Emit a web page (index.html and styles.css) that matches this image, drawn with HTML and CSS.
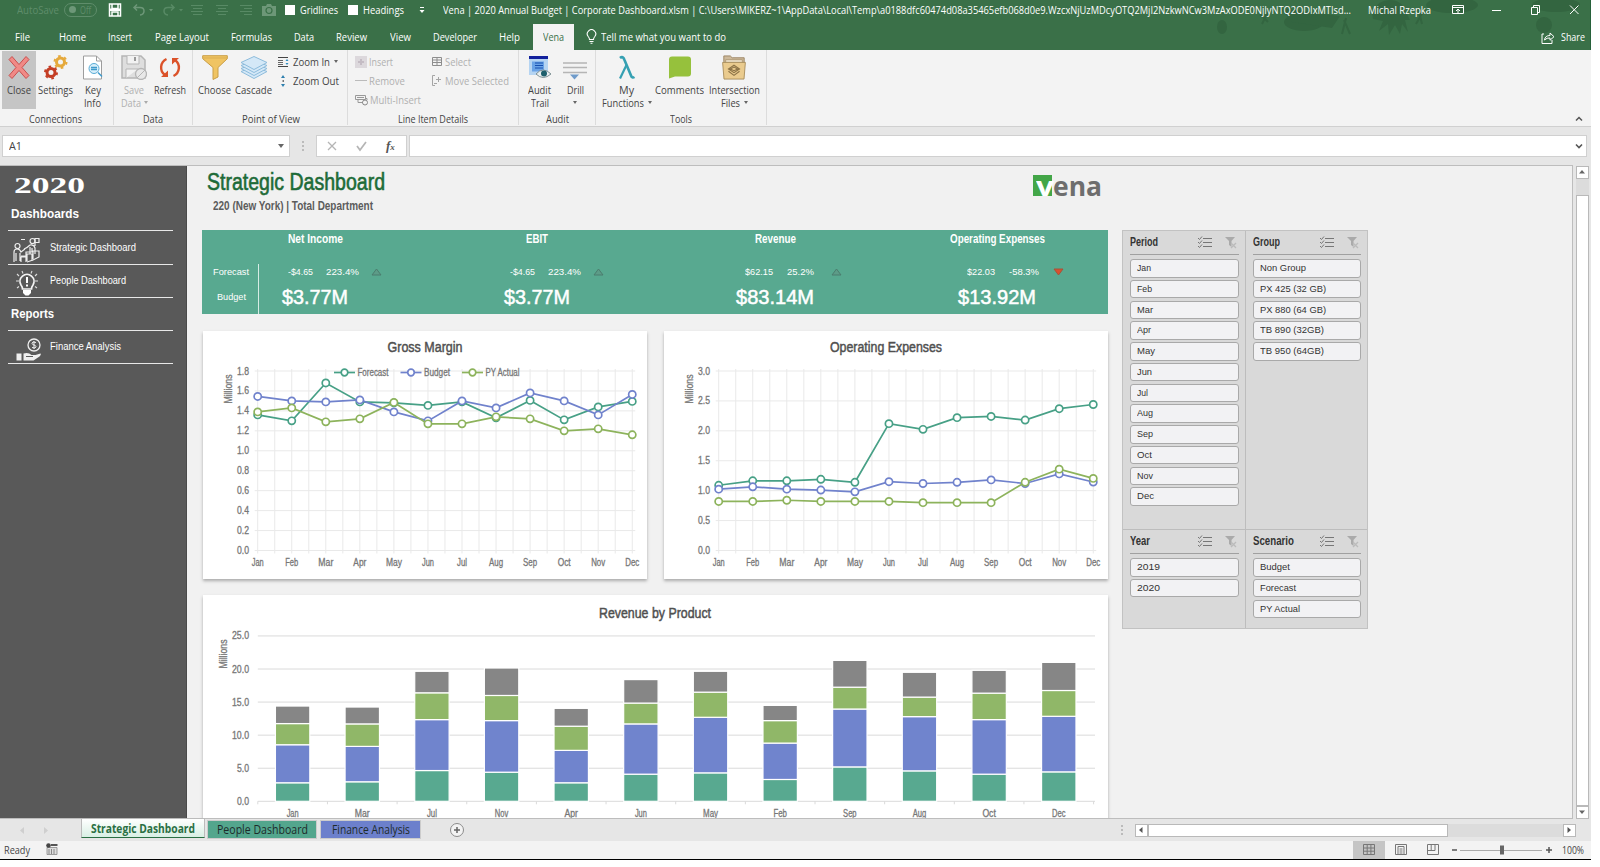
FILE: index.html
```html
<!DOCTYPE html>
<html>
<head>
<meta charset="utf-8">
<title>Corporate Dashboard</title>
<link rel="stylesheet" href="styles.css">
</head>
<body>
<div class="app">

<header class="top">
<svg class="top-art" width="430" height="50" viewBox="0 0 430 50">
<g fill="#336540"><ellipse cx="144" cy="22" rx="20" ry="9"/><path d="M120 8l60 8-8 12-40-6z"/><circle cx="384" cy="25" r="8"/><ellipse cx="62" cy="27" rx="5" ry="7"/><path d="M212 12q6-12 18-12t16 12l4 8-5 0 3 12-6-8-2 10-5-9-6 10-1-11-9 7 4-10-10-2z"/><ellipse cx="292" cy="5" rx="26" ry="8"/><ellipse cx="396" cy="5" rx="24" ry="7"/></g>
<g stroke="#336540" stroke-width="2"><path d="M-52 24l10-8M-46 26l3-12M182 34l4-16M190 34l-6-14M256 24l8-14M262 24l-4-16M100 14l8 8M108 12l-6 12"/></g>
</svg>
<div class="titlebar">
<span class="autosave"><b data-w="42">AutoSave</b></span>
<span class="toggle"><i></i><b data-w="11">Off</b></span>
<svg class="t-save" width="14" height="14" viewBox="0 0 14 14"><path d="M1.500 1h11v12h-11zM4 1v4.500h6V1M4 13V9h6v4" fill="none" stroke="#fff" stroke-width="1.500"/><path d="M2 5.500h10v2.500H2z" fill="#fff"/></svg>
<svg class="t-undo" width="22" height="14" viewBox="0 0 22 14"><path d="M5 1.500L2 4.500l3 3M2 4.500h6q4 0 4 3.500t-4 4" fill="none" stroke="#6d9778" stroke-width="1.500"/><path d="M17 6h4l-2 2.500z" fill="#6d9778"/></svg>
<svg class="t-redo" width="22" height="14" viewBox="0 0 22 14"><path d="M9 1.500l3 3-3 3M12 4.500H6q-4 0-4 3.500t4 4" fill="none" stroke="#588a65" stroke-width="1.500"/><path d="M17 6h4l-2 2.500z" fill="#588a65"/></svg>
<svg class="t-al" width="62" height="12" viewBox="0 0 62 12"><path d="M0 1.500h12M2 4.500h9M0 7.500h12M2 10.500h9M25 1.500h12M27 4.500h8M25 7.500h12M27 10.500h8M49 1.500h12M53 4.500h8M49 7.500h12M53 10.500h8" stroke="#588a65"/></svg>
<svg class="t-cam" width="14" height="12" viewBox="0 0 14 12"><path d="M0 2h4l1-2h4l1 2h4v10H0z" fill="#6d9778"/><circle cx="7" cy="6.500" r="3" fill="none" stroke="#3a7048" stroke-width="1.200"/></svg>
<i class="check"></i><span class="t-txt" data-w="38">Gridlines</span>
<i class="check second"></i><span class="t-txt" data-w="41">Headings</span>
<svg class="t-more" width="6" height="8" viewBox="0 0 6 8"><path d="M1 1.500h4" stroke="#fff"/><path d="M.5 4h5L3 7z" fill="#fff"/></svg>
<span class="doc" data-w="908">Vena | 2020 Annual Budget | Corporate Dashboard.xlsm | C:\Users\MIKERZ~1\AppData\Local\Temp\a0188dfc60474d08a35465efb068d0e9.WzcxNjUzMDcyOTQ2MjI2NzkwNCw3MzAxODE0NjIyNTQ2ODIxMTIsd...</span>
<span class="user" data-w="63">Michal Rzepka</span>
<svg class="t-win" width="128" height="14" viewBox="0 0 128 14"><g fill="none" stroke="#fff"><path d="M.5 2.500h11v8H.5zM.5 4.500h11M6 10V6M4 8l2-2 2 2"/><path d="M40 7.500h9M79.500 4.500h6v7h-6zM81.500 4V2.500h6v7H86M118 2.500l8.500 8.500M126.500 2.500L118 11"/></g></svg>
</div>
<nav class="tabs">
<span class="first"><b data-w="15">File</b></span>
<span><b data-w="27">Home</b></span>
<span><b data-w="24">Insert</b></span>
<span><b data-w="54">Page Layout</b></span>
<span><b data-w="41">Formulas</b></span>
<span><b data-w="20">Data</b></span>
<span><b data-w="31">Review</b></span>
<span><b data-w="21">View</b></span>
<span><b data-w="44">Developer</b></span>
<span><b data-w="21">Help</b></span>
<span class="active"><b data-w="21">Vena</b></span>
<svg class="bulb" width="11" height="15" viewBox="0 0 11 15"><path d="M3.500 10.500Q3.500 9 2.200 7.500A4.200 4.200 0 1 1 8.800 7.500Q7.500 9 7.500 10.500zM3.500 12.500h4M4.500 14.200h2" fill="none" stroke="#fff" stroke-width="1.100"/></svg>
<b data-w="125">Tell me what you want to do</b>
<span class="share"><svg width="14" height="13" viewBox="0 0 14 13"><path d="M3 3H1v9.500h10V9M3.500 9Q4 4.500 9 4.500V2l4 3.700-4 3.500V7Q6 6.500 3.500 9z" fill="none" stroke="#fff"/></svg><b data-w="24">Share</b></span>
</nav>
</header>

<section class="ribbon">
<div class="group g-conn">
<div class="tools">
<div class="big on"><svg width="24" height="24" viewBox="0 0 24 24"><path d="M2 4l3-3 7 8 7-8 3 3-7 8 7 8-3 3-7-8-7 8-3-3 7-8z" fill="#f08a86" stroke="#c9504f"/></svg><b data-w="24">Close</b></div>
<div class="big b-set"><svg width="24" height="24" viewBox="0 0 24 24"><circle cx="16.500" cy="6.500" r="4" fill="none" stroke="#e5a93c" stroke-width="3"/><circle cx="16.500" cy="6.500" r="6" fill="none" stroke="#e5a93c" stroke-width="2" stroke-dasharray="2.600 3.680"/><circle cx="7" cy="17" r="4" fill="none" stroke="#c43e25" stroke-width="3"/><circle cx="7" cy="17" r="6" fill="none" stroke="#c43e25" stroke-width="2" stroke-dasharray="2.600 3.680"/></svg><b data-w="35">Settings</b></div>
<div class="big b-key"><svg width="24" height="24" viewBox="0 0 24 24"><path d="M2.500.5h13l5 5v18h-18z" fill="#fff" stroke="#9d9d9d"/><path d="M15.500.5v5h5" fill="none" stroke="#9d9d9d"/><circle cx="13" cy="13" r="5" fill="#d9effa" stroke="#58acd6"/><path d="M10 12h6M10 14h6M17 17l4 4" stroke="#3f9bcc" stroke-width="1.500"/></svg><b data-w="16">Key</b><b data-w="17">Info</b></div>
</div>
<h4><b data-w="53">Connections</b></h4>
</div>
<div class="group g-data">
<div class="tools">
<div class="big off"><svg width="26" height="25" viewBox="0 0 26 25"><path d="M1 1h19l4 4v18H1z" fill="#dedede" stroke="#b5b5b5" stroke-width="1.500"/><path d="M6 1v8h12V1M5 23V14h12" fill="#f2f2f2" stroke="#b5b5b5"/><path d="M14 2v4" stroke="#999" stroke-width="2"/><circle cx="20" cy="19" r="5.500" fill="#e8e8e8" stroke="#b5b5b5" stroke-width="1.300"/><path d="M16 23l8-8" stroke="#b5b5b5"/></svg><b data-w="20">Save</b><span><b data-w="20">Data</b><i class="caret"></i></span></div>
<div class="big"><svg width="24" height="24" viewBox="0 0 24 24"><path d="M8.500 3.500A9.300 9.300 0 0 0 7 19.500M15.500 20.500A9.300 9.300 0 0 0 17 4.500" fill="none" stroke="#db5229" stroke-width="2.400"/><path d="M3 21.500h7V15zM21 2.500h-7V9z" fill="#db5229"/></svg><b data-w="32">Refresh</b></div>
</div>
<h4><b data-w="20">Data</b></h4>
</div>
<div class="group g-pov">
<div class="tools">
<div class="big"><svg width="26" height="25" viewBox="0 0 26 25"><path d="M.7.700h24.600v3L16 12.500V22l-5 2.500v-12L.7 3.700z" fill="#f0c462" stroke="#c99e46"/><path d="M1 3h24" stroke="#d9ad50"/></svg><b data-w="33">Choose</b></div>
<div class="big"><svg width="28" height="24" viewBox="0 0 28 24"><g fill="#d4e8f7" stroke="#8dbcdc"><path d="M1 16l13-5 13 5-13 7z"/><path d="M1 13l13-5 13 5-13 7z"/><path d="M1 10l13-5 13 5-13 7z"/><path d="M1 7l13-6 13 6-13 7z"/></g></svg><b data-w="37">Cascade</b></div>
<div class="small">
<p><svg width="12" height="12" viewBox="0 0 12 12"><path d="M0 1.500h10M0 10.500h10" stroke="#444"/><path d="M0 4.500h5M0 6.500h5M0 8.500h5" stroke="#666"/><path d="M9 3l1.500 2h-3zM9 9l1.500-2h-3z" fill="#2e8bc0"/></svg><b data-w="37">Zoom In</b><i class="caret"></i></p>
<p><svg width="12" height="12" viewBox="0 0 12 12"><path d="M5 0l2 3H3zM5 12l2-3H3z" fill="#2e7fae"/><path d="M4.500 5h1.500v2H4.500z" fill="#777"/></svg><b data-w="46">Zoom Out</b></p>
</div>
</div>
<h4><b data-w="58">Point of View</b></h4>
</div>
<div class="group g-line">
<div class="tools">
<div class="small off">
<p><svg width="12" height="12" viewBox="0 0 12 12"><path d="M0 0h12v12H0z" fill="#dcd8dc"/><path d="M6 3v6M3 6h6" stroke="#c4bcc4" stroke-width="2"/></svg><b data-w="24">Insert</b></p>
<p><svg width="12" height="12" viewBox="0 0 12 12"><path d="M0 5.500h12" stroke="#bbb"/></svg><b data-w="36">Remove</b></p>
<p><svg width="13" height="12" viewBox="0 0 13 12"><path d="M.5 1.500h10v4H.5zM3 5.500v3h5M2 3.500h7M12 6V4.500h-2" fill="none" stroke="#999"/><circle cx="10" cy="8.500" r="2.500" fill="none" stroke="#888"/></svg><b data-w="51">Multi-Insert</b></p>
</div>
<div class="small off second">
<p><svg width="10" height="11" viewBox="0 0 10 11"><path d="M.5 1.500h9v8h-9zM.5 4h9M.5 6.500h9M5 1v9" fill="none" stroke="#8d8d8d"/></svg><b data-w="26">Select</b></p>
<p><svg width="10" height="11" viewBox="0 0 10 11"><path d="M3 .5H.5v10H3M4 4.500h5M6.500 2v5M2 8.500h3" fill="none" stroke="#a5a5a5"/></svg><b data-w="64">Move Selected</b></p>
</div>
</div>
<h4><b data-w="70">Line Item Details</b></h4>
</div>
<div class="group g-audit">
<div class="tools">
<div class="big"><svg width="24" height="25" viewBox="0 0 24 25"><path d="M1 1h19v19H1z" fill="#b5d4f2"/><path d="M1 1h19v3H1z" fill="#12209c"/><path d="M4 6.500h12v10H4z" fill="#6aa3e6"/><path d="M7 8h8M7 10.500h8M7 13h8" stroke="#174fb0"/><path d="M8 19q7-8 15 0-8 7-15 0z" fill="#e8eef0" stroke="#7d9094"/><circle cx="16" cy="18.500" r="3" fill="#1e5f6c"/></svg><b data-w="23">Audit</b><b data-w="18">Trail</b></div>
<div class="big b-drill"><svg width="24" height="24" viewBox="0 0 24 24"><path d="M0 7.500h24M0 12h24M0 17h24" stroke="#b5b5b5" stroke-width="1.400"/><path d="M7 19h9l-4.500 5z" fill="#6f9bca"/></svg><b data-w="17">Drill</b><i class="caret low"></i></div>
</div>
<h4><b data-w="23">Audit</b></h4>
</div>
<div class="group g-tools">
<div class="tools">
<div class="big"><svg width="18" height="24" viewBox="0 0 18 24"><path d="M2 2.500q3-2.500 4.500 2L13 20q1 3 3.500 1.500" fill="none" stroke="#35a0b2" stroke-width="2.600"/><path d="M8.500 9.500L2 23" stroke="#35a0b2" stroke-width="2.200"/></svg><b data-w="15">My</b><span><b data-w="42">Functions</b><i class="caret"></i></span></div>
<div class="big"><svg width="22" height="24" viewBox="0 0 22 24"><path d="M3 1h16q3 0 3 3v14q0 3-3 3H6l-6 2V4q0-3 3-3z" fill="#96c13c"/></svg><b data-w="49">Comments</b></div>
<div class="big"><svg width="26" height="27" viewBox="0 0 26 27"><path d="M2 7V1h7l2 2h13v6H2z" fill="#cdb99a" stroke="#9a8461"/><path d="M4 5h18v4H4z" fill="#e9dcc4" stroke="#b19c78"/><path d="M.7 8h24.600l-1.500 18H2.200z" fill="#eacb8e" stroke="#a98e5c"/><path d="M13 11l6 4-6 4-6-4zM7 17.500l6 4.500 6-4.500M9 15l4-2 4 2-4 2z" fill="none" stroke="#8c7346" stroke-width="1.200"/></svg><b data-w="51">Intersection</b><span><b data-w="19">Files</b><i class="caret"></i></span></div>
</div>
<h4><b data-w="22">Tools</b></h4>
</div>
<svg class="collapse" width="8" height="6" viewBox="0 0 8 6"><path d="M1 4.500l3-3 3 3" fill="none" stroke="#555" stroke-width="1.500"/></svg>
</section>

<section class="formula">
<div class="namebox"><b data-w="13">A1</b><i class="caret wide"></i></div>
<i class="dots"></i>
<div class="fx"><svg width="92" height="20" viewBox="0 0 92 20"><path d="M11 6l8 8M19 6l-8 8" stroke="#b5b5b5" stroke-width="1.300"/><path d="M40 10l3 4 6-8" fill="none" stroke="#b5b5b5" stroke-width="1.700"/></svg><em>f<small>x</small></em></div>
<div class="finput"><svg width="8" height="6" viewBox="0 0 8 6"><path d="M1 1.500l3 3 3-3" fill="none" stroke="#555" stroke-width="1.600"/></svg></div>
</section>

<main class="work">
<div class="sheet">
<aside class="side">
<div class="year"><b data-w="71">2020</b></div>
<h3><b data-w="68">Dashboards</b></h3>
<div class="item tall"><svg width="28" height="27" viewBox="0 0 28 27"><g fill="none" stroke="#eee" stroke-width="1.200"><circle cx="4.500" cy="9" r="2.500"/><circle cx="19.500" cy="4" r="2.500"/><path d="M1 25V15q0-3 3-3t4 3l4-3M3 16v8M7 16v8M22 1v8M22 1.500h4v4h-4M17 8q-3 3-6 4M17 8q4-1 5 3v6M17 10v7M8 19h5v-4h6v-4M8 25V20h5v5M14 24v-7h5v7M20 22v-8h6v6l-6 3-6 2M8 2.500h4"/></g></svg><b data-w="86">Strategic Dashboard</b></div>
<div class="item"><svg width="28" height="27" viewBox="0 0 28 27"><path d="M9.500 19Q9.500 17 8 15a7 7 0 1 1 12 0q-1.500 2-1.500 4z" fill="none" stroke="#f4f4f4" stroke-width="1.700"/><path d="M10 20h8v3l-2.500 2.500h-3L10 23z" fill="#fff"/><path d="M14 7v6M14 14.500v2" stroke="#fff" stroke-width="2"/><path d="M3 11h3M22 11h3M4 4l2 2M24 4l-2 2M9 1l1 2.500M19 1l-1 2.500M4 18l2-1.500M24 18l-2-1.500" stroke="#ddd" stroke-width="1.100"/></svg><b data-w="76">People Dashboard</b></div>
<h3 class="rep"><b data-w="43">Reports</b></h3>
<div class="item fin"><svg width="28" height="27" viewBox="0 0 28 27"><circle cx="21" cy="9" r="6" fill="none" stroke="#eee" stroke-width="1.300"/><path d="M23 6.500q-4-1.500-4 .8 0 1.200 2 1.700t2 1.700q0 2.300-4 .8M21 5v8" fill="none" stroke="#eee"/><path d="M3.500 17.500h5v7h-5zM10.500 17.500q5-1.500 8 1.500h4l5-1.500q1 1-1 3l-6 4h-10z" fill="#eee"/><path d="M13 20.500h7" stroke="#595959"/></svg><b data-w="71">Finance Analysis</b></div>
</aside>

<div class="board">
<div class="board-head">
<div><h1><b data-w="178">Strategic Dashboard</b></h1><h2><b data-w="160">220 (New York) | Total Department</b></h2></div>
<div class="logo"><span class="v"><b data-w="18">v</b></span><b class="ena" data-w="49">ena</b></div>
</div>
<div class="kpis">
<div class="kpi-labels"><b data-w="36">Forecast</b><b data-w="29">Budget</b></div>
<div class="kpi"><h5><b data-w="55">Net Income</b></h5><div class="row"><span><b data-w="25">-$4.65</b></span><b data-w="33">223.4%</b><svg width="11" height="8" viewBox="0 0 11 8"><path d="M5.500 1L10 7H1z" fill="#5d9c88" stroke="#4b7d6e"/></svg></div><div class="num"><b data-w="66">$3.77M</b></div></div>
<div class="kpi"><h5><b data-w="22">EBIT</b></h5><div class="row"><span><b data-w="25">-$4.65</b></span><b data-w="33">223.4%</b><svg width="11" height="8" viewBox="0 0 11 8"><path d="M5.500 1L10 7H1z" fill="#5d9c88" stroke="#4b7d6e"/></svg></div><div class="num"><b data-w="66">$3.77M</b></div></div>
<div class="kpi right"><h5><b data-w="41">Revenue</b></h5><div class="row late"><span><b data-w="28">$62.15</b></span><b data-w="27">25.2%</b><svg width="11" height="8" viewBox="0 0 11 8"><path d="M5.500 1L10 7H1z" fill="#5d9c88" stroke="#4b7d6e"/></svg></div><div class="num"><b data-w="78">$83.14M</b></div></div>
<div class="kpi"><h5><b data-w="95">Operating Expenses</b></h5><div class="row late"><span><b data-w="28">$22.03</b></span><b data-w="30">-58.3%</b><svg width="11" height="8" viewBox="0 0 11 8"><path d="M1 1h9L5.500 7z" fill="#d9502f" stroke="#a5533a"/></svg></div><div class="num"><b data-w="78">$13.92M</b></div></div>
</div>
<div class="charts">
<svg class="card" id="gross" width="444" height="248"></svg>
<svg class="card" id="opex" width="444" height="248"></svg>
<svg class="card wide" id="revenue" width="905" height="240"></svg>
</div>
</div>

<div class="slicers" id="slicers"></div>
</div>
<div class="vscroll"><i class="btn"><svg width="10" height="10" viewBox="0 0 10 10"><path d="M5 3l3 3.500H2z" fill="#666"/></svg></i><i class="track"></i><i class="thumb"></i><i class="btn"><svg width="10" height="10" viewBox="0 0 10 10"><path d="M5 7l3-3.500H2z" fill="#666"/></svg></i></div>
</main>

<section class="sheets">
<svg class="nav" width="81" height="22" viewBox="0 0 81 22"><path d="M24 8v7l-4-3.500zM44 8v7l4-3.500z" fill="#cfcfcf"/></svg>
<div class="st active"><b data-w="104">Strategic Dashboard</b></div>
<div class="st green"><b data-w="91">People Dashboard</b></div>
<div class="st blue"><b data-w="78">Finance Analysis</b></div>
<svg class="add" width="16" height="16" viewBox="0 0 16 16"><circle cx="8" cy="8" r="6.500" fill="#f3f3f3" stroke="#8c8c8c"/><path d="M8 5v6M5 8h6" stroke="#666" stroke-width="1.500"/></svg>
<i class="dots"></i>
<div class="hscroll"><i class="btn"><svg width="10" height="10" viewBox="0 0 10 10"><path d="M3 5l3.500-3v6z" fill="#555"/></svg></i><i class="thumb"></i><i class="track"></i><i class="btn"><svg width="10" height="10" viewBox="0 0 10 10"><path d="M7 5L3.500 2v6z" fill="#555"/></svg></i></div>
</section>

<footer class="status">
<b data-w="26">Ready</b>
<svg class="rec" width="12" height="12" viewBox="0 0 12 12"><path d="M1 4.500h10v7H1z" fill="#ddd" stroke="#888" stroke-width=".8"/><path d="M5 1h6.500v2H5z" fill="#555"/><circle cx="2.500" cy="2.500" r="2.300" fill="#444"/><path d="M3 6v5M5.500 6v5M8 6v5" stroke="#888"/></svg>
<div class="view on"><svg width="12" height="12" viewBox="0 0 12 12"><path d="M.5.5h11v10H.5zM.5 4h11M.5 7.200h11M4.200.5v10M7.900.5v10" fill="none" stroke="#777"/></svg></div>
<div class="view"><svg width="12" height="12" viewBox="0 0 12 12"><path d="M.5.5h11v10H.5zM3 2.500h6v8H3zM4.500 5h3M4.500 7h3M4.500 9h3" fill="none" stroke="#777"/></svg></div>
<div class="view"><svg width="12" height="12" viewBox="0 0 12 12"><path d="M.5.5h11v10H.5zM.5 6.500H8v-6M4.200.5v6" fill="none" stroke="#777"/></svg></div>
<svg class="slider" width="100" height="12" viewBox="0 0 100 12"><path d="M0 6h5M94 6h6M97 3v6" stroke="#555" stroke-width="1.500"/><path d="M8 6.500h82" stroke="#aaa"/><path d="M48 1.500h4v9h-4z" fill="#666"/></svg>
<b class="zoom" data-w="22">100%</b>
</footer>
</div>
<script src="script.js"></script>
</body>
</html>
```

FILE: styles.css
```css
*{
box-sizing:border-box;
}
body{
margin:0;
background:#fff;
font-family:"Open Sans","Noto Sans",sans-serif;
font-size:11px;
color:#444;
}
h1,h2,h3,h4,h5,p{
margin:0;
font-weight:normal;
}
b{
font-weight:inherit;
}
svg{
display:block;
flex:none;
}
[data-w]{
display:inline-block;
flex:none;
white-space:nowrap;
transform-origin:0 50%;
}
.app{
width:1591px;
height:860px;
display:flex;
flex-direction:column;
background:#e6e6e6;
border-bottom:1px solid #000;
overflow:hidden;
}

/* title bar and tabs */
.top{
position:relative;
height:50px;
background:#3a7048;
color:#fff;
border-right:1px solid #27613a;
}
.top-art{
position:absolute;
right:0;
top:0;
}
.titlebar{
position:relative;
display:flex;
align-items:center;
height:19px;
padding-left:17px;
}
.autosave{
color:#5f8d6b;
}
.toggle{
display:flex;
align-items:center;
gap:4px;
width:33px;
height:14px;
margin-left:5px;
padding-left:4px;
border:1px solid #5f8d6b;
border-radius:7px;
color:#5f8d6b;
font-size:10px;
}
.toggle i{
width:7px;
height:7px;
border-radius:50%;
background:#6d9778;
}
.t-save{margin-left:11px;}
.t-undo{margin-left:10px;}
.t-redo{margin-left:8px;}
.t-al{margin-left:7px;}
.t-cam{margin-left:9px;}
.check{
width:10px;
height:10px;
margin:0 5px 0 9px;
background:#fff;
}
.check.second{
margin-left:10px;
}
.t-more{
margin:0 18px 0 15px;
}
.user{
margin-left:17px;
}
.t-win{
margin-left:21px;
}
.tabs{
position:relative;
display:flex;
align-items:center;
height:26px;
margin-top:5px;
padding-left:15px;
}
.tabs>span{
margin-right:22.3px;
display:flex;
}
.tabs>.first{
margin-right:29px;
}
.tabs>.active{
align-self:stretch;
align-items:center;
margin:0 12px 0 -10px;
padding:0 10px;
background:#f3f3f3;
color:#3a7048;
}
.tabs b{
margin-top:-2px;
}
.bulb{
margin:-2px 4px 0 0;
}
.tabs>.share{
margin:0 5px 0 auto;
gap:6px;
}

/* ribbon */
.ribbon{
display:flex;
height:77px;
background:#f3f3f3;
border-bottom:1px solid #d0d0d0;
position:relative;
}
.group{
display:flex;
flex-direction:column;
border-right:1px solid #dcdcdc;
height:75px;
}
.g-conn{width:114px;}
.g-data{width:79px;}
.g-pov{width:155px;}
.g-line{width:171px;}
.g-audit{width:77px;}
.g-tools{width:171px;}
.tools{
display:flex;
height:64px;
padding:1px 0 0 2px;
}
.group h4{
text-align:center;
line-height:13px;
}
.g-conn h4{padding-right:3px;}
.big{
display:flex;
flex-direction:column;
align-items:center;
width:37px;
height:58px;
padding-top:4px;
line-height:13px;
}
.big svg{
height:25px;
margin-bottom:3px;
}
.big span{
display:flex;
align-items:center;
}
.on{
background:#c5c5c5;
}
.big.on{
width:34px;
}
.b-set{
width:39px;
}
.b-key{
width:35px;
}
.b-drill{
width:34px;
}
.off{
color:#b0b0b0;
}
.caret{
width:0;
height:0;
margin-left:4px;
border:2.5px solid transparent;
border-top:3px solid #666;
border-bottom:0;
}
.off .caret{
margin-left:3px;
border-top-color:#aaa;
}
.caret.low{
margin:5px 0 0;
}
.caret.wide{
border-width:3px 3px 0;
border-top-width:4px;
}
.g-data .big{width:36px;}
.g-pov .big{width:39px;}
.small{
padding:1px 0 0 5px;
}
.small p{
display:flex;
align-items:center;
height:19px;
}
.small p svg{
margin-right:3px;
}
.g-line .small{
padding-left:5px;
}
.g-line .small svg{
margin-right:2px;
}
.g-line .small.second{
padding-left:11px;
}
.g-line .second svg{
margin-right:3px;
}
.g-pov h4{
padding-left:2px;
}
.g-audit .tools{padding-left:2px;}
.g-tools .big{width:53px;}
.g-tools .big:last-child{width:56px;}
.g-tools .tools{padding-left:4px;}
.collapse{
position:absolute;
right:8px;
bottom:4px;
}

/* formula bar */
.formula{
display:flex;
align-items:center;
height:38px;
padding:0 0 1px 2px;
}
.namebox,.fx,.finput{
height:22px;
background:#fff;
border:1px solid #d0d0d0;
display:flex;
align-items:center;
}
.namebox{
width:288px;
justify-content:space-between;
padding:0 5px 0 6px;
}
.dots{
width:2px;
height:10px;
margin:0 12px;
background:repeating-linear-gradient(#bbb 0 2px,transparent 2px 4px);
}
.fx{
width:91px;
}
.fx em{
margin-left:-23px;
width:16px;
font:italic bold 13px "Liberation Serif",serif;
color:#555;
}
.fx small{
font-size:9px;
}
.finput{
width:1178px;
margin-left:2px;
justify-content:flex-end;
padding-right:3px;
}

/* worksheet */
.work{
display:flex;
height:653.5px;
}
.sheet{
display:flex;
width:1573px;
background:#f1f1f1;
border:1px solid #bdbdbd;
border-width:1px 1px 1px 0;
overflow:hidden;
}
.side{
flex:none;
width:187px;
background:#595959;
border-right:1px solid #4a4a4a;
padding-left:8px;
color:#fff;
font-family:"Liberation Sans",sans-serif;
}
.year{
padding:5px 0 0 6px;
height:37px;
font:bold 24px/28px "Liberation Serif",serif;
}
.side h3{
height:28px;
padding-left:3px;
font-size:13.5px;
font-weight:bold;
line-height:21px;
width:165px;
border-bottom:1px solid #e8e8e8;
}
.side .rep{
height:33px;
line-height:31px;
}
.item{
display:flex;
align-items:flex-end;
gap:9px;
width:165px;
height:33px;
padding-left:5px;
border-bottom:1px solid #e8e8e8;
font-size:10px;
}
.item.tall{
height:34px;
}
.item b{
line-height:12px;
margin-bottom:10px;
}
.board{
flex:none;
width:920px;
margin-left:15px;
font-family:"Liberation Sans Narrow","Liberation Sans",sans-serif;
}
.board-head{
display:flex;
justify-content:space-between;
height:64px;
}
.board-head h1{
padding:2px 0 0 5px;
font-size:23px;
line-height:28px;
-webkit-text-stroke:.6px;
color:#1e6b38;
}
.board-head h2{
padding-left:11px;
font-size:12px;
line-height:20px;
font-weight:bold;
color:#5c5c5c;
}
.logo{
display:flex;
margin:9px 20px 0 0;
font:bold 27px/22px "Open Sans",sans-serif;
color:#6e6e6e;
height:21px;
}
.logo .v{
width:19px;
background:#43a648;
color:#fff;
padding-left:3px;
margin-right:1px;
}
.kpis{
display:flex;
width:906px;
height:84px;
background:#58a990;
color:#fff;
padding-left:2px;
}
.kpi-labels{
display:flex;
flex-direction:column;
align-items:center;
width:55px;
height:50px;
align-self:flex-end;
margin-right:-55px;
padding-top:2px;
border-right:1px solid #d6ece5;
font-size:9.5px;
line-height:12px;
gap:13px;
}
.kpi{
width:222px;
text-align:center;
}
.kpi.right{
margin-left:16px;
}
.kpi h5{
font-size:12px;
font-weight:bold;
line-height:18px;
}
.row{
display:flex;
align-items:center;
margin:16px 0 0 80px;
height:15px;
font-size:9.5px;
}
.row span{
width:29px;
text-align:right;
margin-right:13px;
}
.row.late span{
margin-right:14px;
}
.row svg{
margin-left:auto;
margin-right:44px;
}
.num{
font:21px/30px "Liberation Sans Narrow","Liberation Sans",sans-serif;
-webkit-text-stroke:.5px;
margin-top:3px;
}
.charts{
display:flex;
flex-wrap:wrap;
gap:16px 17px;
margin:17px 0 0 1px;
width:905px;
}
.card{
background:#fff;
box-shadow:0 2px 3px #aaa;
font-family:"Liberation Sans Narrow","Liberation Sans",sans-serif;
font-size:10px;
fill:#777;
}
.card text{
stroke:#777;
stroke-width:.3px;
}
.card .title{
font-size:15.5px;
fill:#505050;
stroke:#505050;
stroke-width:.5px;
}
.grid{
stroke:#e9e9e9;
}

/* slicers */
.slicers{
display:grid;
grid-template-columns:123px 121px;
grid-template-rows:299px 98px;
align-self:flex-start;
flex:none;
margin:64px 0 0;
background:#d9d9d9;
border:1px solid #c2c2c2;
font-family:"Liberation Sans",sans-serif;
color:#333;
}
.slicer{
padding:0 6px 0 7px;
border-right:1px solid #bdbdbd;
border-bottom:1px solid #bdbdbd;
}
.slicer:nth-child(2n){
border-right:0;
}
.slicer:nth-child(n+3){
border-bottom:0;
}
.slicer h6{
display:flex;
align-items:center;
margin:0 0 4px;
height:24px;
font-size:12px;
line-height:20px;
border-bottom:1px solid #a0a0a0;
}
.slicer h6 b{
margin-top:-1px;
}
.slicer h6 svg{
margin:-1px 1px 0 11px;
}
.slicer h6 svg:nth-of-type(1){
margin-left:auto;
}
.slicer div{
height:18.5px;
margin-bottom:2.25px;
padding-left:6px;
background:#f2f2f4;
border:1px solid #a9a9a9;
border-radius:3px;
font-size:9.5px;
line-height:15px;
}

/* scroll bars */
.vscroll{
display:flex;
flex-direction:column;
width:13px;
margin-left:3px;
padding-top:1px;
}
.btn,.thumb{
background:#fff;
border:1px solid #b9b9b9;
}
.btn{
display:block;
width:13px;
height:13px;
}
.track{
background:#dcdcdc;
}
.vscroll .track{
height:16px;
}
.vscroll .thumb{
flex:1;
}

/* sheet tabs */
.sheets{
display:flex;
align-items:flex-start;
height:22.5px;
}
.st{
height:19px;
margin-top:1px;
line-height:17px;
font-size:12px;
color:#1d2b2a;
text-align:center;
border:1px solid #ccc;
}
.st.active{
width:124px;
height:20px;
margin:-1px 2px 0 0;
line-height:20px;
font-weight:bold;
color:#2a6f43;
background:linear-gradient(#fff,#d8efe4);
border-color:#bbb;
border-bottom:1px solid #2a6f43;
}
.st.green{
width:110px;
margin-right:3px;
background:#53a68d;
}
.st.blue{
width:101px;
background:#6c80cc;
}
.add{
margin:3px 0 0 28px;
}
.sheets .dots{
margin:6px 12px 0 auto;
}
.hscroll{
display:flex;
width:441px;
margin:5px 15px 0 0;
}
.hscroll .btn,.hscroll .thumb,.hscroll .track{
height:13px;
}
.hscroll .thumb{
width:300px;
}
.hscroll .track{
flex:1;
}

/* status bar */
.status{
display:flex;
align-items:center;
height:18px;
background:#f3f3f3;
padding-left:4px;
}
.status b{
margin-top:-2px;
}
.rec{
margin:-2px auto 0 16px;
}
.view{
display:flex;
align-items:center;
justify-content:center;
width:32px;
height:18px;
}
.slider{
margin:0 10px 0 3px;
}
.status::after{
content:"";
width:7px;
}
```

FILE: script.js
```js
const NS = 'http://www.w3.org/2000/svg';
const months = ['Jan','Feb','Mar','Apr','May','Jun','Jul','Aug','Sep','Oct','Nov','Dec'];
const colors = ['#47a086','#7082cc','#8db35c'];

function add(svg, name, attrs, text)
{
const el = document.createElementNS(NS, name);
for (const key in attrs) el.setAttribute(key, attrs[key]);
if (text) el.textContent = text;
svg.appendChild(el);
return el;
}

function label(svg, text, x, y, width, anchor, cls)
{
const attrs = {x: x, y: y, 'text-anchor': anchor || 'middle'};
if (width) { attrs.textLength = width; attrs.lengthAdjust = 'spacingAndGlyphs'; }
if (cls) attrs.class = cls;
return add(svg, 'text', attrs, text);
}

function lineChart(id, title, titleWidth, max, step, series, legend)
{
const svg = document.getElementById(id);
const left = 54.7, top = 40, bottom = 219.5, dx = 34.05;
const y = v => bottom - v / max * (bottom - top);
label(svg, title, 222, 21, titleWidth, 'middle', 'title');
for (let v = 0; v <= max + 0.01; v += step)
{
add(svg, 'line', {x1: left - 3, x2: left + dx * 11 + 3, y1: y(v), y2: y(v), class: 'grid'});
label(svg, v.toFixed(1), 46, y(v) + 3.5, 12, 'end');
}
for (let i = 0; i <= 22; i++)
{
const x = left + i * dx / 2;
add(svg, 'line', {x1: x, x2: x, y1: top - 2, y2: bottom + 3, class: 'grid'});
}
const names = [12,13,15,13,16,12,10,14,14,13,14,14];
months.forEach((m, i) => label(svg, m, left + i * dx, 235, names[i]));
label(svg, 'Millions', 0, 0, 29).setAttribute('transform', 'translate(28.5 58) rotate(-90)');
series.forEach((data, s) => {
const pts = data.map((v, i) => [left + i * dx, y(v)]);
add(svg, 'polyline', {points: pts.join(' '), fill: 'none', stroke: colors[s], 'stroke-width': 1.7});
pts.forEach(p => add(svg, 'circle', {cx: p[0], cy: p[1], r: 3.6, fill: '#fff', stroke: colors[s], 'stroke-width': 1.7}));
});
if (legend)
{
[['Forecast',131,31],['Budget',197.5,26],['PY Actual',259,34]].forEach((l, s) => {
add(svg, 'line', {x1: l[1], x2: l[1] + 21, y1: 41.5, y2: 41.5, stroke: colors[s], 'stroke-width': 1.7});
add(svg, 'circle', {cx: l[1] + 10.5, cy: 41.5, r: 3.3, fill: '#fff', stroke: colors[s], 'stroke-width': 1.7});
label(svg, l[0], l[1] + 23.5, 45, l[2], 'start');
});
}
}

function stackChart()
{
const svg = document.getElementById('revenue');
const fills = ['#58a990','#7084cd','#90b768','#868686'];
const bars = [
['Jan',2.8,8.55,11.75,14.4],['Mar',2.95,8.3,11.7,14.25],['Jul',4.65,12.35,16.4,19.65],
['Nov',4.4,12.2,16,20.15],['Apr',2.8,7.7,11.35,14.05],['Jun',4.1,11.7,14.85,18.4],
['May',4.3,12.7,16.5,19.65],['Feb',3.3,8.8,12.2,14.5],['Sep',5.2,13.95,17.25,21.3],
['Aug',4.6,12.8,15.75,19.5],['Oct',4.1,12.35,16.35,19.8],['Dec',4.45,12.85,16.75,21]
];
const widths = {Jan:12, Jul:10, Jun:12, Mar:15, May:15};
const left = 54.8, bottom = 206.3, dx = 69.65;
const y = v => bottom - v * 6.615;
label(svg, 'Revenue by Product', 452, 23, 112, 'middle', 'title');
for (let v = 0; v <= 25; v += 5)
{
add(svg, 'line', {x1: left, x2: 892, y1: y(v), y2: y(v), stroke: '#dadada'});
label(svg, v.toFixed(1), 46, y(v) + 3.5, v < 10 ? 12 : 17, 'end');
}
for (let i = 0; i <= 12; i++) add(svg, 'line', {x1: left + i * dx, x2: left + i * dx, y1: bottom, y2: bottom + 3, stroke: '#dadada'});
label(svg, 'Millions', 0, 0, 29).setAttribute('transform', 'translate(23.5 59) rotate(-90)');
bars.forEach((b, i) => {
const cx = left + dx * (i + 0.5);
let from = 0;
for (let s = 1; s < b.length; s++)
{
add(svg, 'rect', {x: cx - 17.2, y: y(b[s]), width: 34.4, height: y(from) - y(b[s]), fill: fills[s - 1], stroke: '#fff', 'stroke-width': 1.2});
from = b[s];
}
label(svg, b[0], cx, 222, widths[b[0]] || 13.5);
});
}

function slicers()
{
const icons = '<svg width="14" height="13" viewBox="0 0 14 13"><path d="M5 2.500h9M5 6.500h9M5 10.500h9M0 2l1.500 1.500L4 .5M0 6l1.500 1.500L4 4.500M0 10l1.500 1.500L4 8.500" fill="none" stroke="#777"/></svg>' +
'<svg width="14" height="13" viewBox="0 0 14 13"><path d="M1 1h10L7.500 5v6L5 9V5z" fill="#aaa"/><path d="M7 7l5 5M12 7l-5 5" stroke="#bbb" stroke-width="1.300"/></svg>';
const data = [
['Period', 28, months.map(m => [m, {Jan:14,Feb:15,Mar:16,Apr:14,May:18,Jun:15,Jul:11,Aug:16,Sep:16,Oct:15,Nov:16,Dec:17}[m]])],
['Group', 27, [['Non Group',46],['PX 425 (32 GB)',66],['PX 880 (64 GB)',66],['TB 890 (32GB)',64],['TB 950 (64GB)',64]]],
['Year', 20, [['2019',23],['2020',23]]],
['Scenario', 41, [['Budget',30],['Forecast',36],['PY Actual',40]]]
];
document.getElementById('slicers').innerHTML = data.map(d =>
'<section class="slicer"><h6><b data-w="' + d[1] + '">' + d[0] + '</b>' + icons + '</h6>' +
d[2].map(i => '<div><b data-w="' + i[1] + '">' + i[0] + '</b></div>').join('') + '</section>').join('');
}

function fitLabels()
{
document.querySelectorAll('[data-w]').forEach(el => {
const natural = el.getBoundingClientRect().width;
const w = parseFloat(el.dataset.w);
el.style.transform = 'scaleX(' + w / natural + ')';
el.style.marginRight = (w - natural) + 'px';
});
}

lineChart('gross', 'Gross Margin', 75, 1.8, 0.2, [
[1.36,1.30,1.68,1.49,1.48,1.455,1.49,1.33,1.505,1.31,1.44,1.495],
[1.545,1.50,1.49,1.51,1.39,1.30,1.50,1.43,1.58,1.50,1.36,1.565],
[1.39,1.43,1.29,1.32,1.485,1.27,1.27,1.34,1.32,1.20,1.22,1.16]
], true);
lineChart('opex', 'Operating Expenses', 112, 3, 0.5, [
[1.09,1.165,1.165,1.19,1.14,2.12,2.025,2.22,2.24,2.18,2.37,2.44],
[1.025,1.065,1.025,1.01,0.98,1.15,1.12,1.14,1.18,1.12,1.28,1.145],
[0.82,0.82,0.84,0.82,0.82,0.82,0.80,0.80,0.80,1.14,1.36,1.205]
], false);
stackChart();
slicers();
fitLabels();
```
